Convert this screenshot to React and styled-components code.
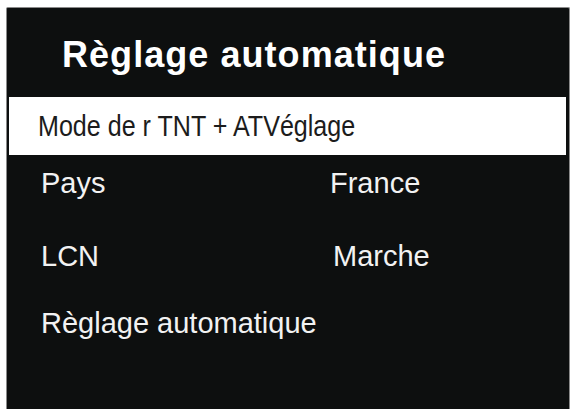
import React from 'react';
import styled, { createGlobalStyle } from 'styled-components';

const GlobalStyle = createGlobalStyle`
  html, body {
    margin: 0;
    padding: 0;
    background: #ffffff;
  }
  body {
    font-family: "Liberation Sans", Arial, sans-serif;
  }
`

const rows = [
  { label: 'Pays', value: 'France', gap: 13.5, shift: 0 },
  { label: 'LCN', value: 'Marche', gap: 44, shift: 3 },
  { label: 'Règlage automatique', value: '', gap: 38, shift: 0 },
]

export default function App() {
  return (
    <>
      <GlobalStyle />
      <Screen>
        <Panel>
          <Title>Règlage automatique</Title>
          <Selected>
            <Narrow>Mode de r TNT + ATVéglage</Narrow>
          </Selected>
          {rows.map(row => (
            <Row key={row.label} $gap={row.gap}>
              <Label>{row.label}</Label>
              {row.value && <Value $shift={row.shift}>{row.value}</Value>}
            </Row>
          ))}
        </Panel>
      </Screen>
    </>
  )
}

const Screen = styled.div`
  width: 573px;
  height: 409px;
  overflow: hidden;
  padding: 7px 0 0 6px;
  box-sizing: border-box;
`

const Panel = styled.div`
  width: 564px;
  height: 420px;
  box-sizing: border-box;
  background: #0d0f0f;
  border: 1px solid #8a8a8a;
  border-bottom: none;
  border-radius: 2px 2px 0 0;
  display: flex;
  flex-direction: column;
`

const Title = styled.h1`
  margin: 28.5px 0 24.5px 55px;
  font-size: 36px;
  line-height: 36px;
  font-weight: bold;
  letter-spacing: 1.05px;
  color: #ffffff;
`

const Selected = styled.div`
  margin: 0 3px 0 2px;
  height: 58px;
  background: #ffffff;
  display: flex;
  align-items: center;
  padding-left: 29px;
  overflow: hidden;
`

const Narrow = styled.span`
  display: inline-block;
  font-size: 29px;
  line-height: 58px;
  color: #1c1c1c;
  white-space: nowrap;
  transform: scaleX(0.865);
  transform-origin: left center;
`

const Row = styled.div`
  margin-top: ${p => p.$gap}px;
  padding-left: 34px;
  display: grid;
  grid-template-columns: 289px 1fr;
  font-size: 29px;
  line-height: 29px;
  color: #f2f2f2;
`

const Label = styled.span`
  white-space: nowrap;
`

const Value = styled.span`
  margin-left: ${p => p.$shift}px;
  white-space: nowrap;
`
